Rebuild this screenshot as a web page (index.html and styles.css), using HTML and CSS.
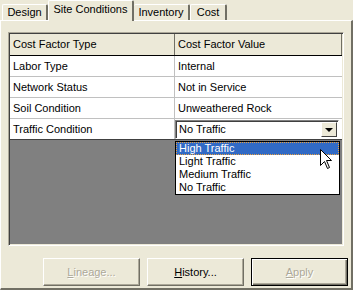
FILE: index.html
```html
<!DOCTYPE html>
<html lang="en">
<head>
    <meta charset="UTF-8">
    <title>Site Conditions</title>
    <link rel="stylesheet" href="styles.css">
</head>
<body>
    <div class="window">
        <div class="tabs">
            <div class="tab tab-design">Design</div>
            <div class="tab tab-site active">Site Conditions</div>
            <div class="tab tab-inventory">Inventory</div>
            <div class="tab tab-cost">Cost</div>
        </div>
        <div class="panel">
            <div class="grid">
                <div class="row head">
                    <div class="cell key">Cost Factor Type</div>
                    <div class="cell">Cost Factor Value</div>
                </div>
                <div class="row">
                    <div class="cell key">Labor Type</div>
                    <div class="cell">Internal</div>
                </div>
                <div class="row">
                    <div class="cell key">Network Status</div>
                    <div class="cell">Not in Service</div>
                </div>
                <div class="row">
                    <div class="cell key">Soil Condition</div>
                    <div class="cell">Unweathered Rock</div>
                </div>
                <div class="row last">
                    <div class="cell key">Traffic Condition</div>
                    <div class="cell combo-cell">
                        <div class="combo">
                            <span class="combo-text">No Traffic</span>
                            <span class="combo-btn"><span class="arrow"></span></span>
                        </div>
                    </div>
                </div>
                <div class="empty"></div>

                <ul class="droplist">
                    <li class="selected">High Traffic</li>
                    <li>Light Traffic</li>
                    <li>Medium Traffic</li>
                    <li>No Traffic</li>
                </ul>

                <svg class="cursor" width="13" height="21" viewBox="0 0 13 21">
                    <path d="M0.5 0.5 L0.5 16.5 L4.5 12.5 L7.5 19.5 L9.5 18.5 L6.5 11.5 L11.5 11.5 Z" fill="#fff" stroke="#000" stroke-width="1"/>
                </svg>
            </div>

            <div class="buttons">
                <button class="btn" disabled><u>L</u>ineage...</button>
                <button class="btn"><u>H</u>istory...</button>
                <button class="btn default" disabled><u>A</u>pply</button>
            </div>
        </div>
    </div>
</body>
</html>
```

FILE: styles.css
```css
body {
    margin: 0;
    background-color: #ece9d8;
    font-family: "Liberation Sans", Arial, sans-serif;
    font-size: 11px;
    color: #000;
}

.window {
    width: 353px;
    height: 290px;
    display: flex;
    flex-direction: column;
}

.tabs {
    display: flex;
    align-items: flex-end;
    height: 20px;
    padding-left: 2px;
}

.tab {
    height: 16px;
    box-sizing: border-box;
    text-align: center;
    line-height: 15px;
    border-top: 1px solid #fff;
    border-left: 1px solid #fff;
    border-right: 2px solid #716f64;
    border-radius: 2px 2px 0 0;
}

.tab-design { width: 46px; }
.tab-site { width: 86px; }
.tab-inventory { width: 56px; border-left: none; }
.tab-cost { width: 37px; }

.tab.active {
    height: 21px;
    line-height: 17px;
    margin-bottom: -1px;
    margin-left: 0;
    position: relative;
    z-index: 1;
    background-color: #ece9d8;
}

.panel {
    flex: 1;
    box-sizing: border-box;
    border-top: 1px solid #fff;
    border-left: 1px solid #fff;
    border-right: 2px solid #716f64;
    border-bottom: 2px solid #716f64;
    padding: 11px 3px 0 7px;
}

.grid {
    position: relative;
    width: 332px;
    height: 210px;
    border-style: solid;
    border-width: 1px;
    border-color: #aca899 #fff #fff #aca899;
    box-shadow: inset 1px 1px 0 #404040, inset -1px -1px 0 #ece9d8;
    padding: 1px;
    display: flex;
    flex-direction: column;
}

.row {
    display: flex;
    height: 20px;
    background-color: #fff;
    border-bottom: 1px solid #c0c0c0;
}

.row.head {
    height: 21px;
    background-color: #ece9d8;
    border-bottom: 1px solid #000;
}

.row.last {
    border-bottom: 1px solid #404040;
}

.cell {
    flex: 1;
    line-height: 20px;
    padding-left: 3px;
    white-space: nowrap;
    overflow: hidden;
}

.head .cell {
    line-height: 21px;
    border-right: 1px solid #716f64;
}

.cell.key {
    flex: 0 0 161px;
    border-right: 1px solid #c0c0c0;
}

.head .cell.key {
    border-right: 1px solid #716f64;
}

.combo-cell {
    padding: 1px 3px 0 0;
}

.combo {
    height: 19px;
    box-sizing: border-box;
    display: flex;
    align-items: center;
    border-style: solid;
    border-width: 1px;
    border-color: #808080 #fff #fff #808080;
    box-shadow: inset 1px 1px 0 #404040;
    background-color: #fff;
}

.combo-text {
    flex: 1;
    padding-left: 3px;
    line-height: 17px;
}

.combo-btn {
    width: 16px;
    height: 15px;
    margin-right: 1px;
    box-sizing: border-box;
    background-color: #ece9d8;
    border-style: solid;
    border-width: 1px;
    border-color: #fff #404040 #404040 #fff;
    display: flex;
    align-items: center;
    justify-content: center;
}

.arrow {
    width: 0;
    height: 0;
    border-left: 4px solid transparent;
    border-right: 4px solid transparent;
    border-top: 4px solid #000;
}

.empty {
    flex: 1;
    background-color: #808080;
}

.droplist {
    position: absolute;
    left: 166px;
    top: 108px;
    width: 163px;
    margin: 0;
    padding: 0;
    list-style: none;
    background-color: #fff;
    border: 1px solid #000;
}

.droplist li {
    height: 13px;
    line-height: 13px;
    padding-left: 3px;
    box-sizing: border-box;
}

.droplist li.selected {
    background-color: #316ac5;
    color: #fff;
    outline: 1px dotted #e8a040;
    outline-offset: -1px;
}

.cursor {
    position: absolute;
    left: 311px;
    top: 116px;
}

.buttons {
    display: flex;
    justify-content: flex-end;
    gap: 7px;
    margin-top: 12px;
}

.btn {
    width: 97px;
    height: 28px;
    font-family: "Liberation Sans", Arial, sans-serif;
    font-size: 11px;
    background-color: #ece9d8;
    color: #000;
    border-style: solid;
    border-width: 1px;
    border-color: #fff #716f64 #716f64 #fff;
    box-shadow: inset -1px -1px 0 #aca899;
    padding: 0;
}

.btn:disabled {
    color: #aca899;
    text-shadow: 1px 1px 0 #fff;
}

.btn.default {
    border: 1px solid #000;
    box-shadow: inset 1px 1px 0 #fff, inset -1px -1px 0 #716f64, inset -2px -2px 0 #aca899;
}
```
